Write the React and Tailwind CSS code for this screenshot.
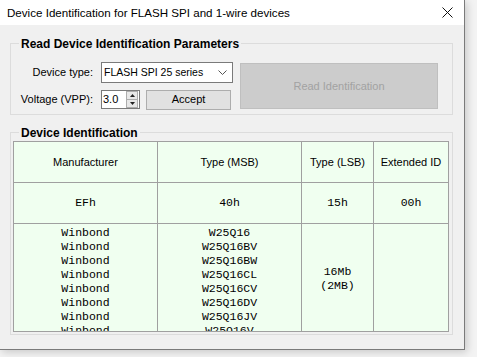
import React from "react";

const mono = { fontFamily: '"Liberation Mono", "Courier New", monospace' };

function GroupTitle({ children }) {
  return (
    <span className="absolute left-[8px] top-[-7px] bg-[#f0f0f0] px-[2px] text-[12px] leading-[15px] font-bold text-black">
      {children}
    </span>
  );
}

export default function App() {
  const models = [
    "W25Q16",
    "W25Q16BV",
    "W25Q16BW",
    "W25Q16CL",
    "W25Q16CV",
    "W25Q16DV",
    "W25Q16JV",
    "W25Q16V",
  ];
  return (
    <div
      className="w-[477px] h-[357px] overflow-hidden bg-[#f3f3f3]"
      style={{ fontFamily: '"Liberation Sans", Arial, sans-serif' }}
    >
      <div className="w-[465px] h-[350px] bg-[#f0f0f0] border-r border-b border-[#7a7a7a] shadow-[2px_2px_8px_rgba(0,0,0,0.18)] flex flex-col">
        {/* Title bar */}
        <div className="h-[25px] bg-white flex items-center justify-between pl-[7px] pr-[10px] shrink-0">
          <span className="text-[11.6px] text-black">
            Device Identification for FLASH SPI and 1-wire devices
          </span>
          <svg width="11" height="11" viewBox="0 0 11 11" className="mr-[1px]">
            <path d="M0.5 0.5 L10.5 10.5 M10.5 0.5 L0.5 10.5" stroke="#111" strokeWidth="1" />
          </svg>
        </div>

        {/* Group 1 */}
        <div className="relative ml-[10px] mt-[18px] w-[443px] h-[72px] border border-[#dcdcdc] shrink-0">
          <GroupTitle>Read Device Identification Parameters</GroupTitle>
          <div className="flex pt-[18px]">
            <div className="flex flex-col gap-[7px]">
              <div className="flex items-center h-[21px]">
                <span className="w-[82px] text-right text-[11px] text-black">Device type:</span>
                <div className="ml-[8px] w-[132px] h-[21px] bg-white border border-[#7a7a7a] flex items-center justify-between pl-[2px] pr-[5px]">
                  <span className="text-[10.5px] text-black whitespace-nowrap">FLASH SPI 25 series</span>
                  <svg width="9" height="6" viewBox="0 0 9 6">
                    <path d="M0.5 0.5 L4.5 4.5 L8.5 0.5" fill="none" stroke="#555" strokeWidth="1" />
                  </svg>
                </div>
              </div>
              <div className="flex items-center h-[19px]">
                <span className="w-[82px] text-right text-[11px] text-black">Voltage (VPP):</span>
                <div className="ml-[8px] w-[39px] h-[19px] bg-white border border-[#7a7a7a] flex items-center pl-[1px]">
                  <span className="text-[11px] text-black flex-1">3.0</span>
                  <div className="w-[12px] h-[17px] flex flex-col border border-[#adadad] mr-[1px]">
                    <div className="flex-1 bg-[#e8e8e8] border-b border-[#adadad] flex items-center justify-center">
                      <svg width="5" height="3" viewBox="0 0 5 3"><path d="M0 3 L2.5 0 L5 3Z" fill="#222" /></svg>
                    </div>
                    <div className="flex-1 bg-[#e8e8e8] flex items-center justify-center">
                      <svg width="5" height="3" viewBox="0 0 5 3"><path d="M0 0 L2.5 3 L5 0Z" fill="#222" /></svg>
                    </div>
                  </div>
                </div>
                <div className="ml-[6px] w-[85px] h-[20px] bg-[#e1e1e1] border border-[#adadad] flex items-center justify-center text-[11px] text-black">
                  Accept
                </div>
              </div>
            </div>
            <div className="ml-[7px] mt-[1px] w-[198px] h-[46px] bg-[#cccccc] border border-[#bfbfbf] flex items-center justify-center text-[11px] text-[#a2a2a2]">
              Read Identification
            </div>
          </div>
        </div>

        {/* Group 2 */}
        <div className="relative ml-[10px] mt-[17px] w-[443px] h-[203px] border border-[#dcdcdc] shrink-0">
          <GroupTitle>Device Identification</GroupTitle>
          <div className="ml-[2px] mt-[8px] w-[436px] h-[191px] overflow-hidden border border-[#a0a0a0] bg-[#f0fff0]">
            <div className="grid grid-cols-[144px_144px_72px_74px] text-black">
              <div className="h-[41px] border-r border-b border-[#a0a0a0] flex items-center justify-center text-[11px]">Manufacturer</div>
              <div className="h-[41px] border-r border-b border-[#a0a0a0] flex items-center justify-center text-[11px]">Type (MSB)</div>
              <div className="h-[41px] border-r border-b border-[#a0a0a0] flex items-center justify-center text-[11px]">Type (LSB)</div>
              <div className="h-[41px] border-b border-[#a0a0a0] flex items-center justify-center text-[11px]">Extended ID</div>

              <div className="h-[41px] border-r border-b border-[#a0a0a0] flex items-center justify-center text-[11.5px] text-black" style={mono}>EFh</div>
              <div className="h-[41px] border-r border-b border-[#a0a0a0] flex items-center justify-center text-[11.5px] text-black" style={mono}>40h</div>
              <div className="h-[41px] border-r border-b border-[#a0a0a0] flex items-center justify-center text-[11.5px] text-black" style={mono}>15h</div>
              <div className="h-[41px] border-b border-[#a0a0a0] flex items-center justify-center text-[11.5px] text-black" style={mono}>00h</div>

              <div className="h-[120px] border-r border-[#a0a0a0] flex flex-col items-center pt-[2px] text-[11.5px] leading-[14px] text-black" style={mono}>
                {models.map((m) => (
                  <span key={m}>Winbond</span>
                ))}
              </div>
              <div className="h-[120px] border-r border-[#a0a0a0] flex flex-col items-center pt-[2px] text-[11.5px] leading-[14px] text-black" style={mono}>
                {models.map((m) => (
                  <span key={m}>{m}</span>
                ))}
              </div>
              <div className="h-[120px] border-r border-[#a0a0a0] flex flex-col items-center pt-[41px] text-[11.5px] leading-[14px] text-black" style={mono}>
                <span>16Mb</span>
                <span>(2MB)</span>
              </div>
              <div className="h-[120px]" />
            </div>
          </div>
        </div>
      </div>
    </div>
  );
}
